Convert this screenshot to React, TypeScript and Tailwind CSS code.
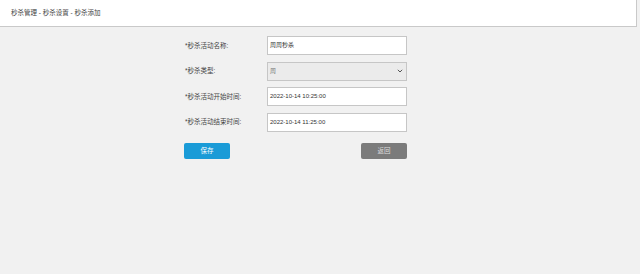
import React from "react";

const font = { fontFamily: '"Liberation Sans", "Noto Sans CJK SC", sans-serif' };

function Row({ label, children }: { label: string; children: React.ReactNode }) {
  return (
    <div className="flex items-center h-[19px]">
      <div className="w-[83px] pl-[1px] text-[6.5px] text-[#444]">{label}</div>
      {children}
    </div>
  );
}

export default function App() {
  return (
    <div className="w-[640px] h-[274px] bg-[#f1f1f1] overflow-hidden" style={font}>
      <div className="w-[637px] h-[27px] bg-white border-b border-r border-[#c9c9c9] flex items-center pl-[11px] text-[6.5px] text-[#444]">
        秒杀管理 - 秒杀设置 - 秒杀添加
      </div>
      <div className="ml-[184px] mt-[9px] w-[223px] flex flex-col gap-[6.5px]">
        <Row label="*秒杀活动名称:">
          <div className="w-[140px] h-[19px] bg-white border border-[#c6c6c6] flex items-center pl-[2px] text-[6px] text-[#333]">
            周周秒杀
          </div>
        </Row>
        <Row label="*秒杀类型:">
          <div className="w-[140px] h-[19px] bg-[#ebebeb] border border-[#c6c6c6] flex items-center justify-between pl-[2px] pr-[3px] text-[6px] text-[#777]">
            <span>周</span>
            <svg width="6" height="4" viewBox="0 0 6 4">
              <path d="M0.8 0.8 L3 3 L5.2 0.8" fill="none" stroke="#555" strokeWidth="1" />
            </svg>
          </div>
        </Row>
        <Row label="*秒杀活动开始时间:">
          <div className="w-[140px] h-[19px] bg-white border border-[#c6c6c6] flex items-center pl-[2px] text-[6px] text-[#333]">
            2022-10-14 10:25:00
          </div>
        </Row>
        <Row label="*秒杀活动结束时间:">
          <div className="w-[140px] h-[19px] bg-white border border-[#c6c6c6] flex items-center pl-[2px] text-[6px] text-[#333]">
            2022-10-14 11:25:00
          </div>
        </Row>
        <div className="flex justify-between mt-[5px]">
          <div className="w-[46px] h-[16px] rounded-[2px] bg-[#1a9bd7] text-white text-[6.5px] flex items-center justify-center">
            保存
          </div>
          <div className="w-[46px] h-[16px] rounded-[2px] bg-[#7b7b7b] text-[#ddd] text-[6.5px] flex items-center justify-center">
            返回
          </div>
        </div>
      </div>
    </div>
  );
}
